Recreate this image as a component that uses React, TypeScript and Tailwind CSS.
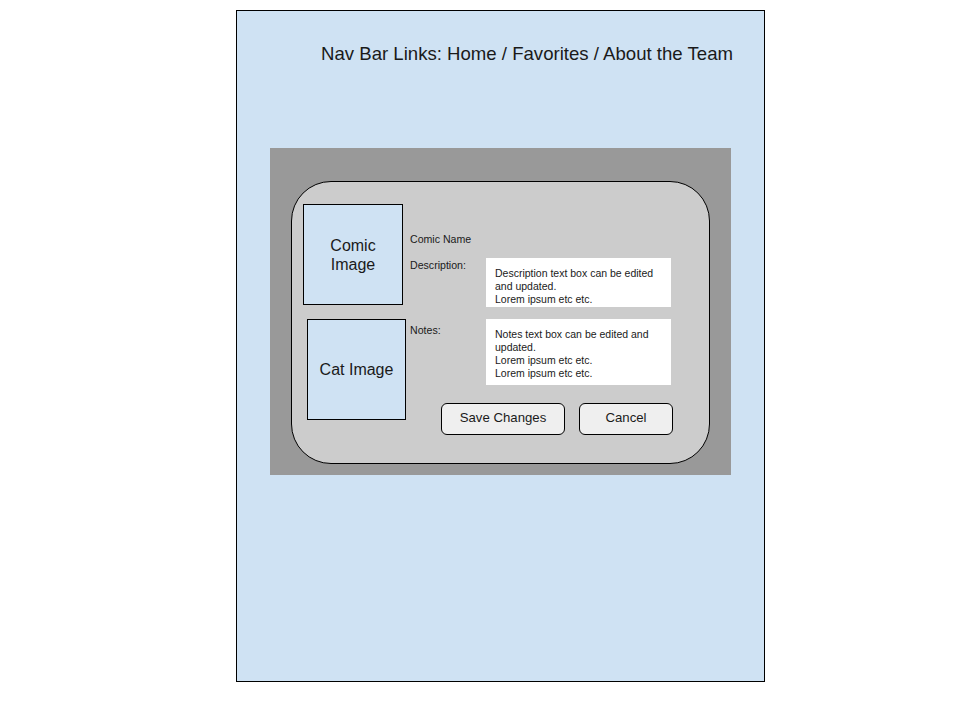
export default function App() {
  return (
    <div className="w-[960px] h-[720px] bg-white pt-[10px] pl-[236px] font-['Liberation_Sans',Arial,sans-serif] text-[#1a1a1a]">
      <div className="w-[529px] h-[672px] border border-black bg-[#cfe2f3]">
        <div className="pl-[84px] pt-[32px] h-[137px] text-[18.6px] leading-[22px]">
          Nav Bar Links: Home / Favorites / About the Team
        </div>
        <div className="ml-[33px] w-[461px] h-[327px] bg-[#999999] pl-[21px] pt-[33px]">
          <div className="w-[419px] h-[283px] rounded-[40px] border border-black bg-[#cccccc] flex">
            <div className="flex flex-col">
              <div className="ml-[11px] mt-[22px] w-[100px] h-[101px] border border-black bg-[#cfe2f3] flex items-center justify-center text-center text-[16px] leading-[19px]">
                Comic
                <br />
                Image
              </div>
              <div className="ml-[15px] mt-[14px] w-[99px] h-[101px] border border-black bg-[#cfe2f3] flex items-center justify-center text-[16px] leading-[19px]">
                Cat Image
              </div>
            </div>
            <div className="ml-[4px] flex flex-col text-[10.6px] leading-[13px]">
              <div className="mt-[51px]">Comic Name</div>
              <div className="mt-[12px] flex">
                <div className="w-[76px] mt-[1px]">Description:</div>
                <div className="w-[185px] h-[49px] bg-white pl-[9px] pt-[9px] text-[10.5px] leading-[13px]">
                  Description text box can be edited
                  <br />
                  and updated.
                  <br />
                  Lorem ipsum etc etc.
                </div>
              </div>
              <div className="mt-[12px] flex">
                <div className="w-[76px] mt-[5px]">Notes:</div>
                <div className="w-[185px] h-[66px] bg-white pl-[9px] pt-[9px] text-[10.5px] leading-[13px]">
                  Notes text box can be edited and
                  <br />
                  updated.
                  <br />
                  Lorem ipsum etc etc.
                  <br />
                  Lorem ipsum etc etc.
                </div>
              </div>
              <div className="mt-[18px] ml-[31px] flex gap-[14px] text-[13.2px]">
                <button className="w-[124px] h-[32px] pb-[3px] rounded-[6px] border border-black bg-[#efefef]">
                  Save Changes
                </button>
                <button className="w-[94px] h-[32px] pb-[3px] rounded-[6px] border border-black bg-[#efefef]">
                  Cancel
                </button>
              </div>
            </div>
          </div>
        </div>
      </div>
    </div>
  );
}
